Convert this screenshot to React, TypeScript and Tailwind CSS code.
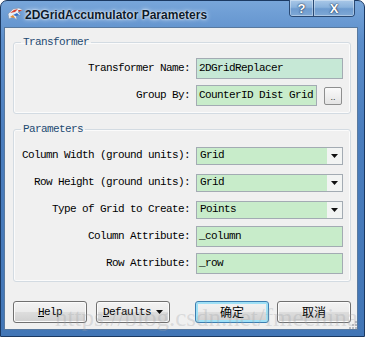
import React from "react";

const mono = "font-['Liberation_Mono',monospace] text-[11px] tracking-[-0.6px] text-black";

function FmeIcon() {
  return (
    <svg width="17" height="15" viewBox="0 0 17 15" className="shrink-0">
      <path d="M1 7 L6 2 L12 1 L16 3 L11 5 L14 8 L9 8 L10 13 L6 10 L2 12 Z" fill="#e9eef6" stroke="#7d8fa8" strokeWidth="0.6" />
      <path d="M3 6 L7 3 L11 2 L8 5 Z" fill="#d8402f" />
      <path d="M6 8 L10 6 L12 8 L9 9 Z" fill="#2f6fc7" />
      <path d="M3 10 L6 8 L8 11 Z" fill="#e88a2c" />
      <path d="M11 3 L15 3 L12 5 Z" fill="#c9392b" />
    </svg>
  );
}

function TextField({ value, width = "w-[147px]", tint = "bg-[#c8ecca]" }: { value: string; width?: string; tint?: string }) {
  return (
    <div className={`flex h-[21px] ${width} shrink-0 items-center border border-[#a3abb3] ${tint} pl-[2px]`}>
      <span className={`${mono} whitespace-pre`}>{value}</span>
    </div>
  );
}

function Combo({ value }: { value: string }) {
  return (
    <div className="flex h-[18px] w-[147px] shrink-0 items-stretch border border-[#a3abb3] bg-[#c8ecca]">
      <span className={`${mono} flex flex-1 items-center pl-[3px]`}>{value}</span>
      <div className="flex w-[15px] items-center justify-center bg-[#f2f4f3]">
        <svg width="7" height="4" viewBox="0 0 7 4">
          <path d="M0 0 H7 L3.5 4 Z" fill="#111" />
        </svg>
      </div>
    </div>
  );
}

function Row({ label, children }: { label: string; children: React.ReactNode }) {
  return (
    <div className="flex h-[21px] items-center gap-[6px]">
      <span className={`${mono} w-[176px] shrink-0 text-right whitespace-pre`}>{label}</span>
      {children}
    </div>
  );
}

function Group({ title, children, className = "" }: { title: string; children: React.ReactNode; className?: string }) {
  return (
    <fieldset className={`rounded-[3px] border border-[#d3dbe2] px-0 pt-[9px] pb-[7px] shadow-[inset_0_0_0_1px_#fbfbfb] ${className}`}>
      <legend className="ml-[7px] px-[2px] font-['Liberation_Mono',monospace] text-[11px] leading-[14px] tracking-[-0.6px] text-[#1d4a72]">
        {title}
      </legend>
      <div className="flex flex-col gap-[6px]">{children}</div>
    </fieldset>
  );
}

function Button({ children, primary = false }: { children: React.ReactNode; primary?: boolean }) {
  return (
    <div
      className={`flex h-[22px] w-[74px] items-center justify-center rounded-[3px] border bg-[linear-gradient(180deg,#f3f3f3_0%,#ebebeb_48%,#dddddd_52%,#cfcfcf_100%)] ${
        primary
          ? "border-[#3c7fb1] shadow-[inset_0_0_0_2px_#9fe0f6]"
          : "border-[#707070] shadow-[inset_0_0_0_1px_#fbfbfb]"
      }`}
    >
      {children}
    </div>
  );
}

export default function App() {
  return (
    <div className="relative h-[337px] w-[365px] overflow-hidden bg-white">
      <div className="flex h-full w-full flex-col rounded-t-[7px] border border-[#1b3962] bg-[linear-gradient(180deg,#78a6da_0%,#5b8dca_12%,#4a7dbd_40%,#4276b6_100%)]">
        {/* title bar */}
        <div className="flex h-[26px] shrink-0 items-center pl-[6px] pt-[1px]">
          <FmeIcon />
          <span className="ml-[1px] font-['Liberation_Sans',Arial,sans-serif] text-[12px] font-bold text-[#0c1a2c] [text-shadow:0_0_5px_rgba(255,255,255,0.95),0_0_2px_rgba(255,255,255,0.9)]">
            2DGridAccumulator Parameters
          </span>
        </div>

        {/* client area */}
        <div className="relative mr-[6px] mb-[6px] ml-[3px] flex flex-1 flex-col border border-[#58799f] bg-[#f0f0f0] pr-[6px] pl-[8px]">
          <Group title="Transformer" className="mt-[7px]">
            <Row label="Transformer Name:">
              <TextField value="2DGridReplacer" tint="bg-[#c6e8d6]" />
            </Row>
            <Row label="Group By:">
              <TextField value="CounterID Dist Grid" width="w-[121px]" />
              <div className="ml-[1px] flex h-[18px] w-[18px] items-end justify-center rounded-[2px] border border-[#8e8f8f] bg-[linear-gradient(180deg,#fafafa,#e4e4e4)] pb-[2px]">
                <span className="font-['Liberation_Sans',sans-serif] text-[9px] leading-[9px] text-[#333]">..</span>
              </div>
            </Row>
          </Group>

          <Group title="Parameters" className="mt-[8px]">
            <Row label="Column Width (ground units):">
              <Combo value="Grid" />
            </Row>
            <Row label="Row Height (ground units):">
              <Combo value="Grid" />
            </Row>
            <Row label="Type of Grid to Create:">
              <Combo value="Points" />
            </Row>
            <Row label="Column Attribute:">
              <TextField value="_column" />
            </Row>
            <Row label="Row Attribute:">
              <TextField value="_row" />
            </Row>
          </Group>

          <div className="mt-[19px] flex items-center justify-between">
            <div className="flex gap-[9px]">
              <Button>
                <span className={mono}>
                  <span className="underline">H</span>elp
                </span>
              </Button>
              <Button>
                <span className={mono}>
                  <span className="underline">D</span>efaults
                </span>
                <svg width="7" height="4" viewBox="0 0 7 4" className="ml-[5px]">
                  <path d="M0 0 H7 L3.5 4 Z" fill="#111" />
                </svg>
              </Button>
            </div>
            <div className="flex gap-[8px]">
              <Button primary>
                <span className="font-['Noto_Sans_CJK_SC',sans-serif] text-[12px] text-black">确定</span>
              </Button>
              <Button>
                <span className="font-['Noto_Sans_CJK_SC',sans-serif] text-[12px] text-black">取消</span>
              </Button>
            </div>
          </div>

          {/* resize grip */}
          <svg width="8" height="8" viewBox="0 0 8 8" className="absolute right-0 bottom-0">
            {[
              [6, 0], [6, 3], [3, 3], [6, 6], [3, 6], [0, 6],
            ].map(([x, y]) => (
              <rect key={`${x}-${y}`} x={x} y={y} width="2" height="2" fill="#b9bcc0" />
            ))}
          </svg>
        </div>
      </div>

      {/* caption buttons */}
      <div className="absolute top-0 right-[10px] flex h-[17px] overflow-hidden rounded-b-[4px] border border-t-0 border-[#2a4a74]">
        <div className="flex w-[24px] items-center justify-center border-r border-[#2a4a74] bg-[linear-gradient(180deg,#a9c8e8_0%,#8ab2dc_45%,#6d9bcf_55%,#7fa9d6_100%)] shadow-[inset_0_0_0_1px_rgba(255,255,255,0.35)]">
          <span className="font-['Liberation_Sans',sans-serif] text-[13px] leading-none font-bold text-white [text-shadow:0_0_1px_#1c3050,0_0_2px_#1c3050]">?</span>
        </div>
        <div className="flex w-[40px] items-center justify-center bg-[linear-gradient(180deg,#a9c8e8_0%,#8ab2dc_45%,#6d9bcf_55%,#7fa9d6_100%)] shadow-[inset_0_0_0_1px_rgba(255,255,255,0.35)]">
          <span className="font-['Liberation_Sans',sans-serif] text-[13px] leading-none font-bold text-white [text-shadow:0_0_1px_#1c3050,0_0_2px_#1c3050]">X</span>
        </div>
      </div>

      {/* watermark */}
      <div className="pointer-events-none absolute top-[305px] left-[55px] font-['Liberation_Serif',serif] text-[25px] leading-[25px] whitespace-nowrap text-[rgba(160,162,166,0.3)]">
        https://blog.csdn.net/fmechina
      </div>
    </div>
  );
}
